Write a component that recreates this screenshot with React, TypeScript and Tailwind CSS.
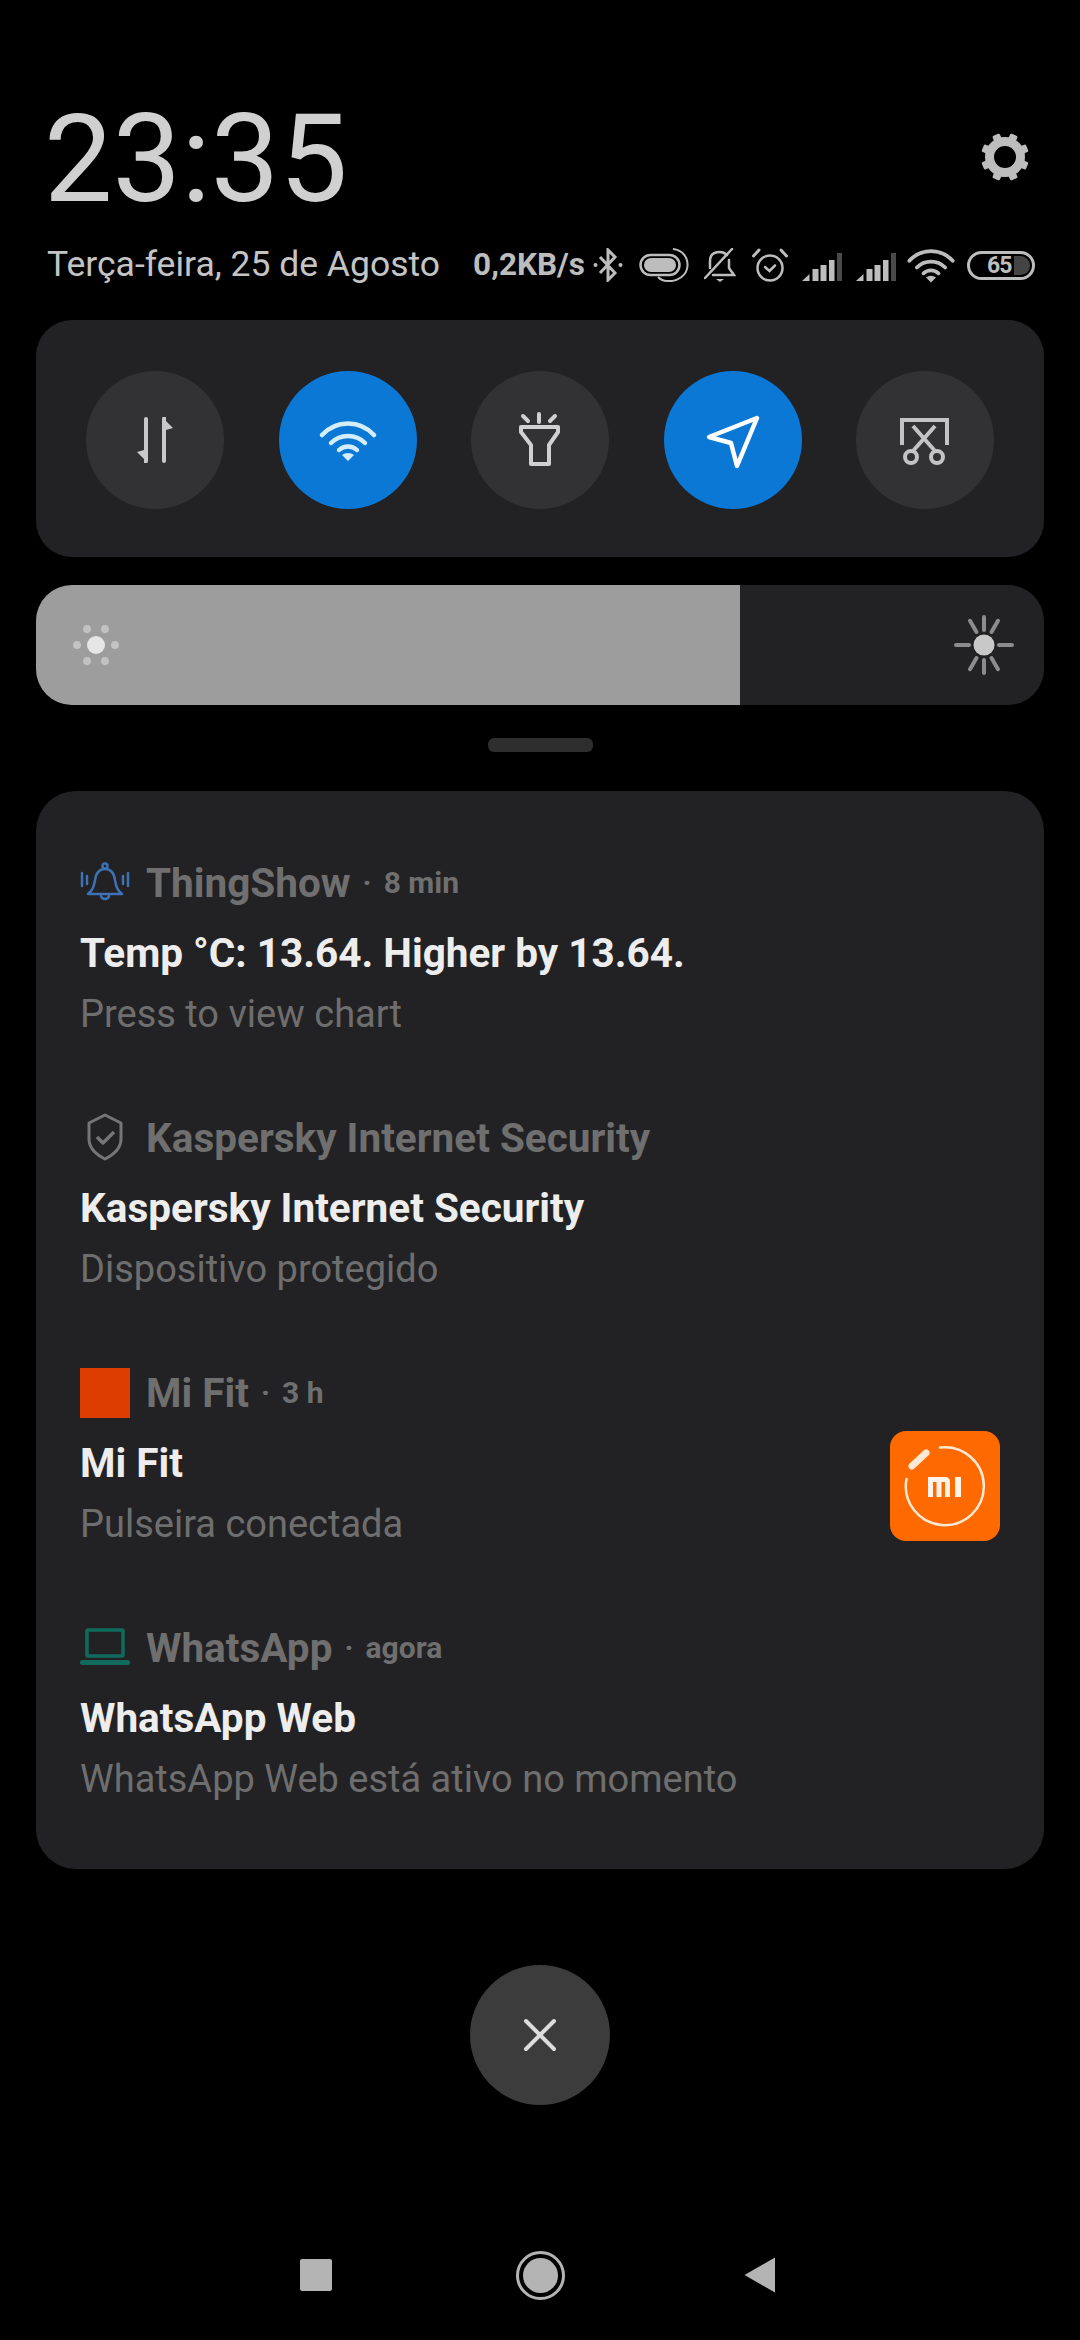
import React from 'react';

const GEAR_TEETH = [22.5, 67.5, 112.5, 157.5, 202.5, 247.5, 292.5, 337.5];
const SUN_RAYS = [0, 30, 90, 150, 180, 210, 270, 330];

function Gear() {
  return (
    <svg width="48" height="48" viewBox="0 0 48 48" fill="none">
      <circle cx="24" cy="24" r="15.5" stroke="#bdbdbd" strokeWidth="9" />
      {GEAR_TEETH.map(a => (
        <rect key={a} x="20" y="0" width="8" height="8" rx="1.5" fill="#bdbdbd" transform={`rotate(${a} 24 24)`} />
      ))}
    </svg>
  );
}

function Bluetooth() {
  return (
    <svg width="30" height="34" viewBox="0 0 30 34" fill="none" stroke="#bdbdbd" strokeWidth="3">
      <path d="M7 9 L22 25 L15 32 V2 L22 9 L7 25" />
      <circle cx="2.5" cy="17" r="2" fill="#bdbdbd" stroke="none" />
      <circle cx="27.5" cy="17" r="2" fill="#bdbdbd" stroke="none" />
    </svg>
  );
}

function LinkCapsule() {
  return (
    <svg width="50" height="34" viewBox="0 0 50 34" fill="none">
      <rect x="1.5" y="7" width="39" height="20" rx="10" stroke="#bdbdbd" strokeWidth="2.5" />
      <rect x="5" y="10" width="32" height="14" rx="7" fill="#bdbdbd" />
      <path d="M34 1 C44 2 49 10 48.5 18 C48 27 39 34 28 33 C24 33 21 31 19 29" stroke="#bdbdbd" strokeWidth="2" />
    </svg>
  );
}

function BellOff() {
  return (
    <svg width="32" height="34" viewBox="0 0 32 34" fill="none" stroke="#bdbdbd" strokeWidth="2.5" strokeLinecap="round">
      <path d="M6 20 V13 C6 7 10 4 16 4 C19 4 21 5 23 7 M25 12 V20 L30 27 H9" />
      <path d="M1 30 L28 1" />
      <path d="M12 31 H20 L16 34 Z" fill="#bdbdbd" stroke="none" />
    </svg>
  );
}

function Alarm() {
  return (
    <svg width="36" height="34" viewBox="0 0 36 34" fill="none" stroke="#bdbdbd" strokeWidth="2.5" strokeLinecap="round">
      <ellipse cx="18" cy="20" rx="12.5" ry="12.5" />
      <path d="M1.5 8 L7 2 M34.5 8 L29 2" strokeWidth="3" />
      <path d="M13 19 L17.5 23 L23 17.5" />
    </svg>
  );
}

function Signal() {
  return (
    <svg width="40" height="28" viewBox="0 0 40 28" fill="#bdbdbd">
      <path d="M0 28 L7.5 21 V28 Z" />
      <rect x="10.5" y="16" width="6" height="12" />
      <rect x="18.5" y="12" width="6" height="16" />
      <rect x="27" y="7" width="5.5" height="21" />
      <rect x="35" y="0" width="5" height="28" fill="#4a4a4a" />
    </svg>
  );
}

function Wifi({ color, size }: { color: string; size: number }) {
  return (
    <svg width={size} height={size} viewBox="0 0 60 60" fill="none" stroke={color} strokeWidth="4.5" strokeLinecap="round">
      <path d="M4 25 A35 35 0 0 1 56 25" />
      <path d="M13 33 A24 24 0 0 1 47 33" />
      <path d="M21 40 A13 13 0 0 1 39 40" />
      <path d="M30 51 L24 45 Q30 41 36 45 Z" fill={color} stroke="none" />
    </svg>
  );
}

function Battery() {
  return (
    <div className="w-[68px] h-[29px] rounded-full border-[3px] border-[#bdbdbd] flex items-center justify-between p-[2px] overflow-hidden">
      <span className="pl-[15px] text-[23px] leading-none font-bold text-[#bdbdbd] tracking-[-1px]">65</span>
      <span className="w-[16px] h-full rounded-r-full bg-[#444444]" />
    </div>
  );
}

function RoundButton({ active, children }: { active?: boolean; children: React.ReactNode }) {
  return (
    <div className={`w-[138px] h-[138px] rounded-full flex items-center justify-center ${active ? 'bg-[#0a78d4]' : 'bg-[#323234]'}`}>
      {children}
    </div>
  );
}

function DataArrows() {
  return (
    <svg width="60" height="60" viewBox="0 0 60 60" fill="#c8c8c8">
      <rect x="19" y="7" width="4" height="46" rx="2" />
      <path d="M23 53 L12 42 L19 40 V53 Z" />
      <rect x="37" y="7" width="4" height="46" rx="2" />
      <path d="M37 7 L48 18 L41 20 V7 Z" />
    </svg>
  );
}

function Flashlight() {
  return (
    <svg width="100" height="100" viewBox="0 0 100 100" fill="none" stroke="#d0d0d0" strokeWidth="4" strokeLinecap="round" strokeLinejoin="round">
      <path d="M31 37 H68 V42 L59 55 V74 H41 V55 L31 42 Z" />
      <path d="M33 26 L38 31 M49 24 V32 M60 31 L65 26" />
    </svg>
  );
}

function LocationArrow() {
  return (
    <svg width="60" height="60" viewBox="0 0 60 60" fill="none" stroke="#ffffff" strokeWidth="4.5" strokeLinejoin="round">
      <path d="M54 8 L6 27 L28 33 L34 56 Z" />
    </svg>
  );
}

function ScreenCut() {
  return (
    <svg width="60" height="60" viewBox="0 0 60 60" fill="none" stroke="#c4c4c4" strokeWidth="4">
      <path d="M7 35 V10 H52 V35" />
      <path d="M18 41 L40 16 M40 41 L18 16" />
      <circle cx="16" cy="47" r="6" />
      <circle cx="42" cy="47" r="6" />
    </svg>
  );
}

function SunLow() {
  const dots = [[-19, 0], [19, 0], [-9, -16], [9, -16], [-9, 16], [9, 16]];
  return (
    <svg width="50" height="50" viewBox="-25 -25 50 50">
      <circle r="9" fill="#e6e6e6" />
      {dots.map(([x, y]) => (
        <circle key={`${x}${y}`} cx={x} cy={y} r="4" fill="#c2c2c2" />
      ))}
    </svg>
  );
}

function SunHigh() {
  return (
    <svg width="60" height="60" viewBox="-30 -30 60 60">
      <circle r="10.5" fill="#c8c8c8" />
      {SUN_RAYS.map(a => (
        <line key={a} x1="0" y1="-15" x2="0" y2="-28" stroke="#8c8c8c" strokeWidth="4" strokeLinecap="round" transform={`rotate(${a})`} />
      ))}
    </svg>
  );
}

function BellRing() {
  return (
    <svg width="50" height="50" viewBox="0 0 50 50" fill="none" stroke="#3f71b5" strokeWidth="2.5" strokeLinecap="round" strokeLinejoin="round">
      <circle cx="25" cy="8" r="2.5" />
      <path d="M8 36 H42 C37 32 36 28 35 22 C34 15 31 11 25 11 C19 11 16 15 15 22 C14 28 13 32 8 36 Z" />
      <path d="M21 38 C22 42 28 42 29 38" />
      <path d="M2 15 V28 M7 18 V26 M48 15 V28 M43 18 V26" />
    </svg>
  );
}

function Shield() {
  return (
    <svg width="50" height="50" viewBox="0 0 50 50" fill="none" stroke="#757575" strokeWidth="3" strokeLinejoin="round">
      <path d="M25 2 L41 10 V26 C41 36 33 42 25 46 C17 42 9 36 9 26 V10 Z" />
      <path d="M17 24 L23 30 L34 19" strokeWidth="3.5" />
    </svg>
  );
}

function Laptop() {
  return (
    <svg width="50" height="50" viewBox="0 0 50 50" fill="none">
      <rect x="7" y="7" width="36" height="26" stroke="#106b5c" strokeWidth="3.5" rx="1" />
      <rect x="0" y="37" width="50" height="5" rx="2.5" fill="#106b5c" />
    </svg>
  );
}

function MiFitLogo() {
  return (
    <svg width="110" height="110" viewBox="0 0 110 110" fill="none" className="rounded-2xl bg-[#ff6a00]">
      <path d="M50 16.5 A39 39 0 1 1 16.5 48" stroke="#ffe9d6" strokeWidth="2.5" strokeLinecap="round" />
      <path d="M22 35 L36 22" stroke="#ffe9d6" strokeWidth="7" strokeLinecap="round" />
      <path d="M38 46 H55 Q60 46 60 51 V66 H55 V51 H51.5 V66 H46.5 V51 H43 V66 H38 Z" fill="#fff4ea" />
      <rect x="65" y="46" width="6" height="20" fill="#fff4ea" />
    </svg>
  );
}

interface NotificationProps {
  icon: React.ReactNode;
  app: string;
  time?: string;
  title: string;
  body: string;
  thumb?: React.ReactNode;
}

function Notification({ icon, app, time, title, body, thumb }: NotificationProps) {
  return (
    <div className="h-[255px] pl-[44px] pr-[44px] flex justify-between">
      <div className="pt-[12px]">
        <div className="h-[50px] flex items-center text-[#6f6f6f]">
          {icon}
          <span className="ml-[16px] text-[40.5px] leading-[50px] font-bold">{app}</span>
          {time && (
            <>
              <span className="ml-[12px] text-[30px] leading-[50px] font-bold">·</span>
              <span className="ml-[12px] text-[30px] leading-[50px] font-bold">{time}</span>
            </>
          )}
        </div>
        <div className="mt-[20px] text-[40.5px] leading-[50px] font-bold text-[#ededed]">{title}</div>
        <div className="mt-[11px] text-[38px] leading-[50px] text-[#6e6e6e]">{body}</div>
      </div>
      {thumb && <div className="mt-[75px]">{thumb}</div>}
    </div>
  );
}

export default function App() {
  return (
    <div className="w-[1080px] h-[2340px] bg-black pt-[98px] overflow-hidden font-['Roboto',sans-serif]">
      <div className="h-[118px] pl-[44px] pr-[51px] flex items-center justify-between">
        <span className="pt-[6px] text-[122px] leading-none font-normal text-[#d0d0d0]">23:35</span>
        <Gear />
      </div>

      <div className="mt-[24px] h-[50px] pl-[47px] flex items-center">
        <span className="shrink-0 whitespace-nowrap text-[35.5px] text-[#c4c4c4]">Terça-feira, 25 de Agosto</span>
        <span className="shrink-0 ml-[33px] text-[31.5px] font-bold text-[#bdbdbd]">0,2KB/s</span>
        <div className="ml-[8px]"><Bluetooth /></div>
        <div className="ml-[16px]"><LinkCapsule /></div>
        <div className="ml-[15px]"><BellOff /></div>
        <div className="ml-[16px]"><Alarm /></div>
        <div className="ml-[14px] mt-[3px]"><Signal /></div>
        <div className="ml-[14px] mt-[3px]"><Signal /></div>
        <div className="ml-[10px]"><Wifi color="#bdbdbd" size={50} /></div>
        <div className="ml-[11px]"><Battery /></div>
      </div>

      <div className="mt-[30px] mx-[36px] h-[237px] rounded-[36px] bg-[#222224] px-[50px] pt-[51px] flex justify-between">
        <RoundButton><DataArrows /></RoundButton>
        <RoundButton active><Wifi color="#d4eeff" size={60} /></RoundButton>
        <RoundButton><Flashlight /></RoundButton>
        <RoundButton active><LocationArrow /></RoundButton>
        <RoundButton><ScreenCut /></RoundButton>
      </div>

      <div className="mt-[28px] mx-[36px] h-[120px] rounded-[36px] bg-[#222224] overflow-hidden flex items-center">
        <div className="w-[704px] h-full bg-[#9d9d9d] pl-[35px] flex items-center">
          <SunLow />
        </div>
        <div className="flex-1 pr-[30px] flex justify-end">
          <SunHigh />
        </div>
      </div>

      <div className="mt-[33px] mx-auto w-[105px] h-[14px] rounded-[6px] bg-[#2e2e2e]" />

      <div className="mt-[39px] mx-[36px] h-[1078px] rounded-[40px] bg-[#222224] pt-[55px]">
        <Notification
          icon={<BellRing />}
          app="ThingShow"
          time="8 min"
          title="Temp °C: 13.64. Higher by 13.64."
          body="Press to view chart"
        />
        <Notification
          icon={<Shield />}
          app="Kaspersky Internet Security"
          title="Kaspersky Internet Security"
          body="Dispositivo protegido"
        />
        <Notification
          icon={<div className="w-[50px] h-[50px] bg-[#de3d00]" />}
          app="Mi Fit"
          time="3 h"
          title="Mi Fit"
          body="Pulseira conectada"
          thumb={<MiFitLogo />}
        />
        <Notification
          icon={<Laptop />}
          app="WhatsApp"
          time="agora"
          title="WhatsApp Web"
          body="WhatsApp Web está ativo no momento"
        />
      </div>

      <div className="mt-[96px] mx-auto w-[140px] h-[140px] rounded-full bg-[#3c3c3c] flex items-center justify-center">
        <svg width="34" height="34" viewBox="0 0 34 34" stroke="#dcdcdc" strokeWidth="4" strokeLinecap="round">
          <path d="M3 3 L31 31 M31 3 L3 31" />
        </svg>
      </div>

      <div className="mt-[146px] h-[48px] pl-[300px] flex items-center">
        <div className="w-[32px] h-[32px] rounded-[2px] bg-[#b4b4b4]" />
        <div className="ml-[184px] w-[49px] h-[49px] rounded-full border-[3px] border-[#b4b4b4] p-[4px]">
          <div className="w-full h-full rounded-full bg-[#b4b4b4]" />
        </div>
        <svg className="ml-[179px]" width="32" height="36" viewBox="0 0 32 36" fill="#b4b4b4">
          <path d="M0.5 18 L31 0.5 V35.5 Z" />
        </svg>
      </div>
    </div>
  );
}
